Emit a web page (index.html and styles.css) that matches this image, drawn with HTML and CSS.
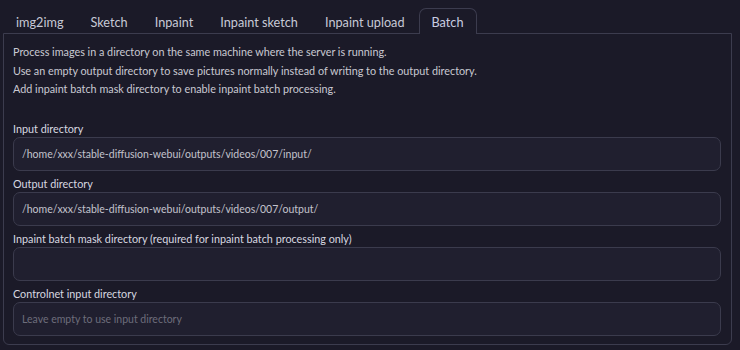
FILE: index.html
```html
<!DOCTYPE html>
<html>
<head>
<meta charset="utf-8">
<link rel="stylesheet" href="styles.css">
</head>
<body>
<div class="tabs">
  <div class="tab-nav">
    <button class="tab">img2img</button>
    <button class="tab">Sketch</button>
    <button class="tab">Inpaint</button>
    <button class="tab">Inpaint sketch</button>
    <button class="tab">Inpaint upload</button>
    <button class="tab selected">Batch</button>
  </div>
  <div class="panel">
    <div class="desc">
      <p>Process images in a directory on the same machine where the server is running.</p>
      <p>Use an empty output directory to save pictures normally instead of writing to the output directory.</p>
      <p>Add inpaint batch mask directory to enable inpaint batch processing.</p>
    </div>
    <label class="field">
      <span class="label">Input directory</span>
      <input class="input" type="text" value="/home/xxx/stable-diffusion-webui/outputs/videos/007/input/">
    </label>
    <label class="field">
      <span class="label">Output directory</span>
      <input class="input" type="text" value="/home/xxx/stable-diffusion-webui/outputs/videos/007/output/">
    </label>
    <label class="field">
      <span class="label">Inpaint batch mask directory (required for inpaint batch processing only)</span>
      <input class="input" type="text" value="">
    </label>
    <label class="field last">
      <span class="label">Controlnet input directory</span>
      <input class="input" type="text" placeholder="Leave empty to use input directory">
    </label>
  </div>
</div>
</body>
</html>
```
FILE: styles.css
```css
html, body {
  margin: 0;
  padding: 0;
  background: #1b1a28;
  font-family: "Lato", "Noto Sans", sans-serif;
}
.tabs {
  padding: 8px 8px 0 3px;
}
.tab-nav {
  display: flex;
  height: 25px;
}
.tab {
  background: transparent;
  border: 1px solid transparent;
  border-bottom: none;
  color: #c7c9d6;
  font-family: inherit;
  font-size: 12.7px;
  padding: 0 13px 0 12px;
  height: 25px;
  line-height: 27px;
  border-radius: 7px 7px 0 0;
  margin: 0;
}
.tab.selected {
  border-color: #3c3c4e;
  background: #1b1a28;
  position: relative;
  z-index: 1;
  height: 26px;
  color: #c9cde0;
}
.panel {
  border: 1px solid #3c3c4e;
  margin-top: 0;
  border-radius: 0 0 6px 6px;
  padding: 9px 10px 8px 9px;
}
.desc {
  color: #c9c9d2;
  font-size: 10.8px;
  line-height: 18.5px;
  margin-bottom: 23px;
}
.desc p {
  margin: 0;
}
.field {
  display: block;
  margin-bottom: 6px;
}
.field.last {
  margin-bottom: 0;
}
.label {
  display: block;
  color: #d8d8e0;
  font-size: 10.8px;
  line-height: 14px;
  margin-bottom: 1px;
}
.input {
  display: block;
  width: 100%;
  box-sizing: border-box;
  height: 34px;
  background: #201f2f;
  border: 1px solid #3b3b4d;
  border-radius: 7px;
  color: #c3c3cd;
  font-family: inherit;
  font-size: 10.5px;
  padding: 0 8px;
  outline: none;
}
.input::placeholder {
  color: #6d6d7b;
}
```
